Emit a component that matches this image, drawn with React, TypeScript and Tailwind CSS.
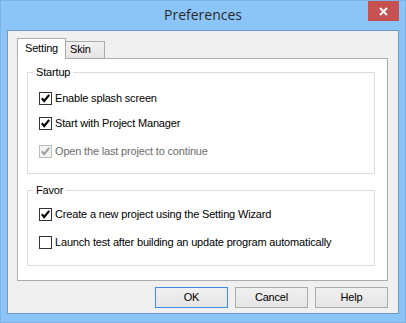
import React from "react";

function CheckBox({ checked, disabled }: { checked: boolean; disabled?: boolean }) {
  return (
    <span
      className={
        "flex h-[13px] w-[13px] shrink-0 items-center justify-center border " +
        (disabled ? "border-[#bcbcbc] bg-[#f3f3f3]" : "border-[#333333] bg-white")
      }
    >
      {checked && (
        <svg width="11" height="11" viewBox="0 0 11 11">
          <polyline
            points="1.8,5.2 4.2,8 9.2,1.8"
            fill="none"
            stroke={disabled ? "#a2a2a2" : "#000000"}
            strokeWidth="2.1"
            strokeLinecap="butt"
            strokeLinejoin="miter"
          />
        </svg>
      )}
    </span>
  );
}

function Row({
  label,
  checked,
  disabled,
  className = "",
}: {
  label: string;
  checked: boolean;
  disabled?: boolean;
  className?: string;
}) {
  return (
    <div className={"flex h-[13px] items-center gap-[3px] " + className}>
      <CheckBox checked={checked} disabled={disabled} />
      <span className={"whitespace-nowrap leading-[13px] " + (disabled ? "text-[#6d6d6d]" : "text-black")}>
        {label}
      </span>
    </div>
  );
}

function Button({ label, focused }: { label: string; focused?: boolean }) {
  return (
    <div
      className={
        "flex h-[21px] w-[73px] items-center justify-center border bg-gradient-to-b from-[#f0f0f0] to-[#e5e5e5] leading-[13px] text-black " +
        (focused ? "border-[#3d8ee0]" : "border-[#acacac]")
      }
    >
      {label}
    </div>
  );
}

export default function App() {
  return (
    <div
      className="flex h-[323px] w-[406px] flex-col border border-[#7cb2e4] bg-[#8bc5f7] text-[11px] tracking-[-0.17px]"
      style={{ fontFamily: '"Liberation Sans", Arial, sans-serif' }}
    >
      {/* Title bar */}
      <div className="grid h-[29px] grid-cols-[1fr_auto_1fr]">
        <div />
        <div
          className="flex items-center pb-[2px] text-[14px] tracking-normal text-[#2a2a2a]"
          style={{ fontFamily: '"Open Sans", "Noto Sans", sans-serif' }}
        >
          Preferences
        </div>
        <div className="flex justify-end pr-[6px]">
          <div className="flex h-[20px] w-[31px] items-center justify-center bg-[#c75050]">
            <svg width="9" height="9" viewBox="0 0 9 9">
              <path d="M1 1 L8 8 M8 1 L1 8" stroke="#ffffff" strokeWidth="2" fill="none" />
            </svg>
          </div>
        </div>
      </div>

      {/* Client area */}
      <div className="mx-[6px] flex h-[284px] flex-col border border-[#6f98c3] bg-[#f0f0f0]">
        {/* Tabs */}
        <div className="flex h-[27px] items-end pl-[9px] pt-[7px]">
          <div className="relative z-10 -mb-px h-[21px] w-[49px] border border-b-0 border-[#acacac] bg-white pl-[7px] pt-[3px] leading-[13px] text-black">
            Setting
          </div>
          <div className="-ml-px h-[17px] w-[40px] border border-b-0 border-[#acacac] bg-gradient-to-b from-[#f0f0f0] to-[#e5e5e5] pl-[4px] pt-[1px] leading-[13px] text-black">
            Skin
          </div>
        </div>

        {/* Tab page */}
        <div className="ml-[9px] h-[223px] w-[371px] border border-[#acacac] bg-white pl-[9px] pt-[7px]">
          <fieldset className="w-[348px] border border-[#dcdcdc] px-0 pb-[15px] pt-[13px]">
            <legend className="ml-[5px] px-[3px] leading-[13px] text-black">Startup</legend>
            <div className="flex flex-col pl-[11px]">
              <Row label="Enable splash screen" checked />
              <Row label="Start with Project Manager" checked className="mt-[12px]" />
              <Row label="Open the last project to continue" checked disabled className="mt-[15px]" />
            </div>
          </fieldset>

          <fieldset className="mt-[10px] w-[348px] border border-[#dcdcdc] px-0 pb-[16px] pt-[11px]">
            <legend className="ml-[5px] px-[3px] leading-[13px] text-black">Favor</legend>
            <div className="flex flex-col pl-[11px]">
              <Row label="Create a new project using the Setting Wizard" checked />
              <Row
                label="Launch test after building an update program automatically"
                checked={false}
                className="mt-[15px]"
              />
            </div>
          </fieldset>
        </div>

        {/* Buttons */}
        <div className="mr-[10px] mt-[6px] flex justify-end gap-[7px]">
          <Button label="OK" focused />
          <Button label="Cancel" />
          <Button label="Help" />
        </div>
      </div>
    </div>
  );
}
